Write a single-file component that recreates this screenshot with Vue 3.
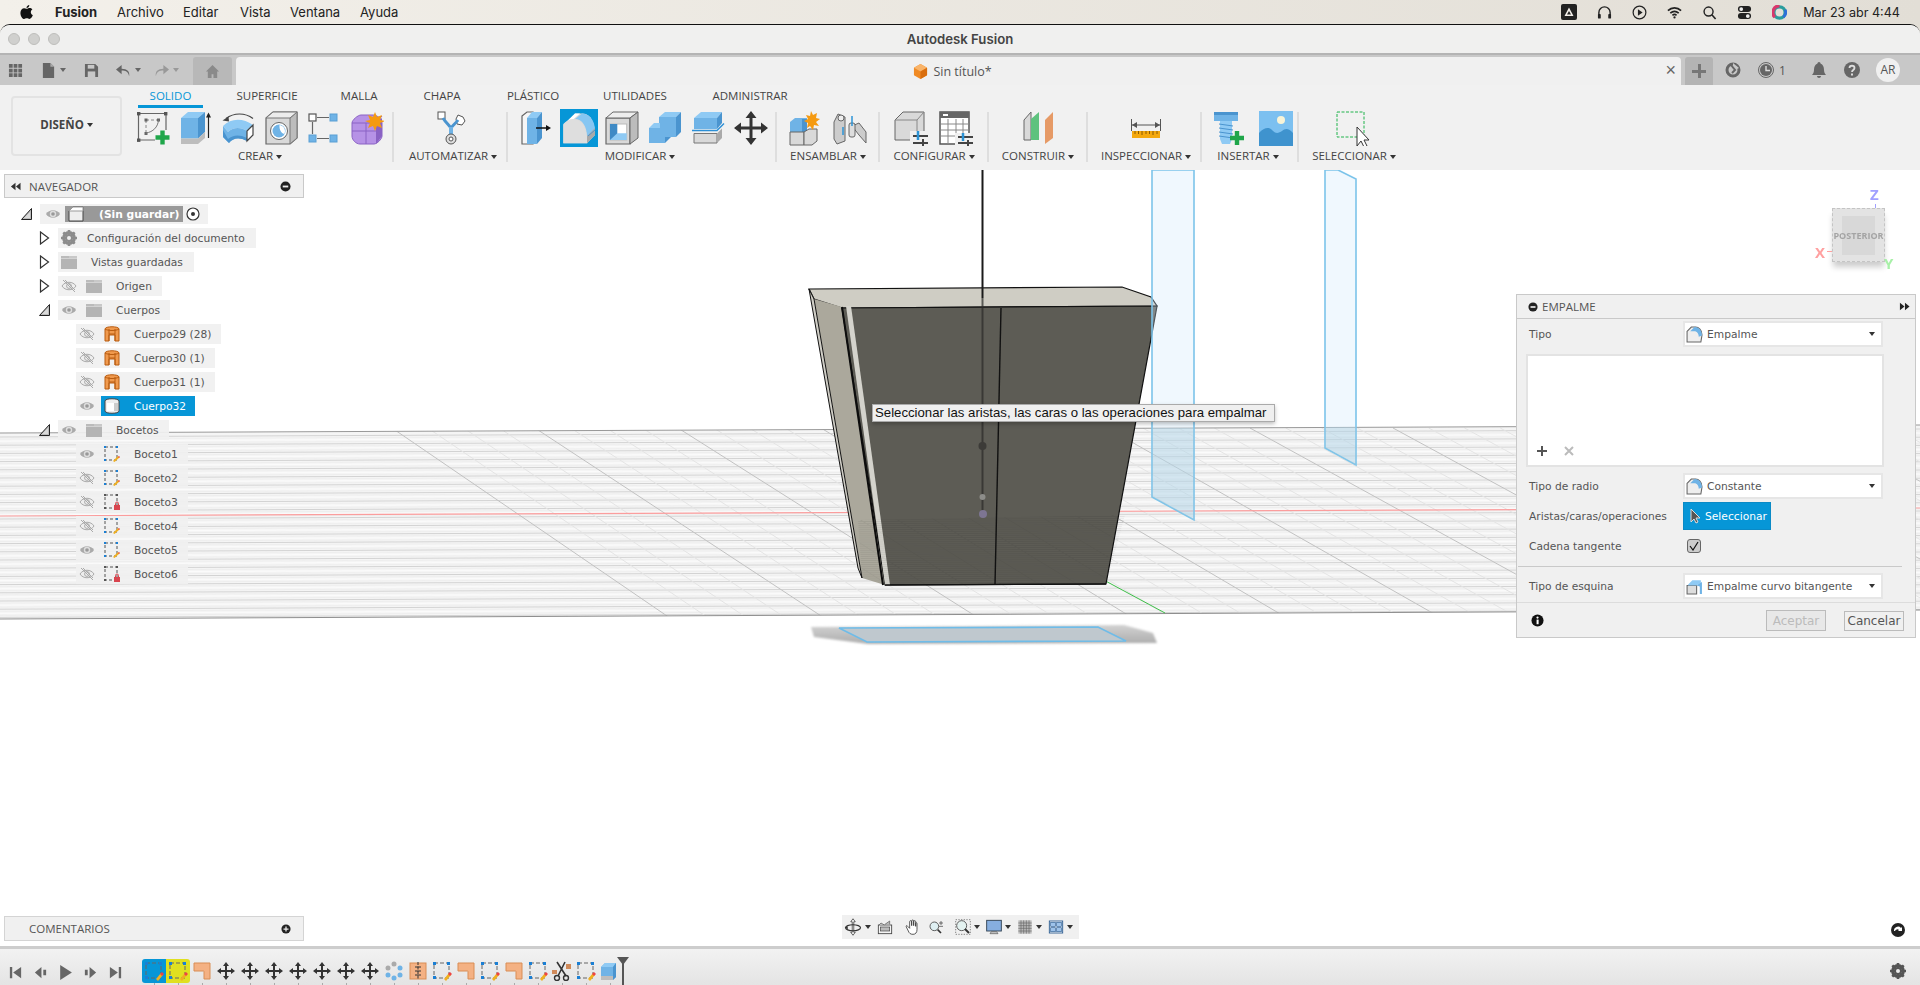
<script setup>
import { h } from 'vue'

const B = '#6fb3e6', BT = '#8fcaf4', BS = '#4a94cf', G = '#d9d9d9', GS = '#bdbdbd', O = '#f4b183'
const plus = (x, y) => `<path d="M${x - 7} ${y}h14M${x} ${y - 7}v14" stroke="#1fa64a" stroke-width="4.400"/>`
const ICONS = {
  sketch: [36, `<path d="M3.500 3.500H31V20M3.500 3.500V30H20" fill="none" stroke="#666" stroke-width="1.200"/><rect x="2" y="2" width="3.400" height="3.400" fill="#555"/><rect x="29" y="2" width="3.400" height="3.400" fill="#555"/><rect x="2" y="28.500" width="3.400" height="3.400" fill="#555"/><path d="M11 10H23M11 10V23" stroke="#888" stroke-dasharray="3 2" fill="none"/><rect x="9.500" y="8.500" width="3" height="3" fill="#666"/><rect x="22" y="8.500" width="3" height="3" fill="#666"/><rect x="9.500" y="22" width="3" height="3" fill="#666"/><path d="M11 23c7-1 12-6 12.500-13" fill="none" stroke="#777"/>${plus(27.5, 27.5)}`],
  extrude: [36, `<path d="M5 8l7-6h17l-7 6z" fill="${BT}"/><path d="M5 8h17v20.500H5z" fill="${B}"/><path d="M22 8l7-6v20l-7 6.500z" fill="${BS}"/><path d="M5 28.500h17l7-6.500v6l-7 6H5z" fill="${GS}"/><path d="M32.500 28V4" stroke="#222" stroke-width="1.200" fill="none"/><path d="M30 7.500l2.500-5 2.500 5z" fill="#222"/>`],
  revolve: [36, `<path d="M5 8.500C13 2.500 24 2.500 32 8.500" fill="none" stroke="#444" stroke-width="1.200"/><path d="M1.500 10.500l6-4 .5 5z" fill="#444"/><path d="M2 16C10 8 22 8 32 15l-6 6C20 17 12 17 7 22z" fill="${BT}"/><path d="M2 16l5 6C12 17 20 17 26 21v10C20 27 12 27 8 33l-6-6z" fill="${B}"/><path d="M2 20v7l6 6c4-5 10-6 18-2v-3C18 24 12 25 7 29z" fill="${BS}"/><path d="M26 21l6-6v10l-6 6z" fill="#fff" stroke="#444" stroke-width="1.200"/>`],
  hole: [36, `<path d="M2 8l7-6h24v26l-7 6H2z" fill="${G}" stroke="#666" stroke-width="1.200"/><path d="M26 8v26l7-6V2z" fill="#bcbcbc" stroke="#777"/><path d="M2 8h24l7-6H9z" fill="#ececec" stroke="#777"/><circle cx="15" cy="21" r="8.500" fill="#fff" stroke="#666"/><circle cx="15" cy="21" r="6.500" fill="${B}"/><path d="M15.500 15c3 .3 5.500 3 5.500 6 0 1-.2 2-.8 3-3-1-5-4-4.700-9z" fill="#fff"/>`],
  pattern: [36, `<rect x="5" y="4" width="7" height="7" fill="#fff" stroke="#555" stroke-width="1.200"/><rect x="26" y="4" width="7" height="7" fill="#6fb3e6" stroke="#5a9fd4"/><rect x="5" y="25" width="7" height="7" fill="#6fb3e6" stroke="#5a9fd4"/><rect x="26" y="25" width="7" height="7" fill="#6fb3e6" stroke="#5a9fd4"/><path d="M13 7.500h12M8.500 12v12M13 28.500h12" stroke="#666" stroke-width="1.200" fill="none"/>`],
  form: [36, `<path d="M4 13c0-3 6-8 9-8h12c4 0 9 4 9 8v13c0 3-5 8-8 8H12c-4 0-8-4-8-8z" fill="#b692e6" stroke="#8a62c4"/><path d="M4 21h24M18 13v21M4 13h24l6-7" stroke="#8a62c4" fill="none"/><path d="M28 13l6-5v18l-6 8z" fill="#8a62c4"/><path d="M27 2l2 5 5-2-2 5 5 1-5 2 2 5-5-2-2 5-2-5-5 2 2-5-5-2 5-1-2-5 5 2z" fill="#f59a10"/>`],
  automate: [36, `<rect x="5" y="2" width="7" height="7" fill="#fff" stroke="#555"/><path d="M25 5l5 2 2 4-3 4-5-1-1-5z" fill="#fff" stroke="#555"/><path d="M10 8c3 5 6 7 8 10 2-3 5-5 7-8" stroke="${BS}" stroke-width="3" fill="none"/><path d="M18 17v9" stroke="${B}" stroke-width="4"/><circle cx="18" cy="29" r="5" fill="#ddd" stroke="#555"/><circle cx="18" cy="29" r="2" fill="#fff" stroke="#555"/>`],
  press: [36, `<path d="M5 6l5-4h6v32H5z" fill="#f6f6f6" stroke="#666" stroke-width="1.200"/><path d="M10 8l5-6h10l-5 6z" fill="${BT}"/><path d="M10 8h10v26H10z" fill="${B}"/><path d="M20 8l5-6v26l-5 6z" fill="${BS}"/><path d="M19 18h11" stroke="#111" stroke-width="1.600"/><path d="M29 15l5 3-5 3z" fill="#111"/>`],
  fillet: [38, `<rect width="38" height="38" fill="#0696d7"/><path d="M3.300 16L15 4.500h8C31 5 35 14 35 26l-8 8.300H3.300z" fill="#d9d9d9"/><path d="M3.300 16L15 4.500h5L9 14z" fill="#fff"/><path d="M15 10l7-5.500C31 5 35 14 35 21l-8 7C27 17 22 10 15 10z" fill="#86c6f2"/><path d="M3.300 15c3-3 6-5 10-5 9 0 14 9 14 24.300H3.300z" fill="#dedede"/><path d="M27 34.300l8-8.300v-7l-8 8z" fill="#a9a9a9"/><path d="M28 27l7-6" stroke="#4a94cf"/>`],
  chamfer: [36, `<path d="M2 8h24v26H2z" fill="${G}" stroke="#666" stroke-width="1.200"/><path d="M2 8l7-6h25l-8 6z" fill="#eee" stroke="#666"/><path d="M26 8l8-6v26l-8 6z" fill="#bcbcbc" stroke="#666"/><rect x="6" y="14" width="16.700" height="16" fill="#fff" stroke="#bbb"/><path d="M6 14h7.300v16H6z" fill="#3f8ac5"/><path d="M13.300 23.300h9.400V30H6z" fill="${BT}"/>`],
  combine: [36, `<path d="M13 7l6-5h16l-5 5z" fill="${BT}"/><path d="M13 7h17v20H13z" fill="${B}"/><path d="M30 7l5-5v20l-5 5z" fill="${BS}"/><path d="M3 18l5-5h6v5z" fill="${BT}"/><path d="M3 18h16v15H3z" fill="${B}"/><path d="M19 33l6-6h-6z" fill="${BS}"/>`],
  offset: [36, `<path d="M5 8l7-6h21l-5 6z" fill="${BT}"/><path d="M5 8h23v11H5z" fill="${B}"/><path d="M28 8l5-6v11l-5 6z" fill="${BS}"/><path d="M3 20.500h25l7-7" stroke="#2b8fd6" stroke-width="1.400" fill="none"/><path d="M5 23.500h23v9.500H5z" fill="${G}" stroke="#777"/><path d="M28 23.500l5-5v9.500l-5 5z" fill="#aaa"/>`],
  move: [36, `<path d="M18 1l5.500 7H19.500v8.500H28v-4l7 5.500-7 5.500v-4h-8.500V28h4L18 35l-5.500-7h4v-8.500H8v4L1 18l7-5.500v4h8.500V8h-4z" fill="#333"/>`],
  joint: [36, `<path d="M3 12l5-4h12v14H3z" fill="${B}"/><path d="M15 9h5v13h-5z" fill="${BS}"/><path d="M3 22h14v13H3z" fill="${G}" stroke="#666"/><path d="M17 22l5-3h8v12l-5 4h-8z" fill="${G}" stroke="#666"/><path d="M24 1l2 4 4-2-1 5 4 1-4 3 3 4-5-1-1 5-3-4-3 2 1-5-4-2 4-2-2-4 4 1z" fill="#f59a10"/>`],
  rigid: [36, `<path d="M2 12l4-8 7 3v24l-8 3-3-5z" fill="#ccc" stroke="#666"/><circle cx="9" cy="8" r="3" fill="#eee" stroke="#666"/><path d="M20 16l7-3 7 9v11l-7-8z" fill="#ccc" stroke="#666"/><rect x="17" y="13" width="6" height="14" rx="2" fill="#ddd" stroke="#666"/><path d="M11 17v8M20 6v10" stroke="#2b93d6" stroke-width="1.500"/>`],
  config: [36, `<path d="M2 10l8-8h21v28H2z" fill="${G}" stroke="#666"/><path d="M24 10v20M24 10H2M24 10l7-8" stroke="#888" fill="none"/><rect x="17" y="21" width="19" height="14" fill="#f0f0f0"/><path d="M20 26h15M20 33h15" stroke="#444" stroke-width="2"/><path d="M25 21v9" stroke="#2b93d6" stroke-width="2.500"/><path d="M30 29v7" stroke="#444" stroke-width="2"/>`],
  table: [36, `<rect x="2" y="2" width="29" height="32" fill="#fff" stroke="#555" stroke-width="1.500"/><rect x="2" y="2" width="29" height="6" fill="#666"/><rect x="5" y="4" width="5" height="2" fill="#fff"/><path d="M3 14h28M3 20h28M3 26h28M10 9v25M18 9v25M25 9v25" stroke="#888"/><rect x="17" y="23" width="19" height="13" fill="#f0f0f0"/><path d="M20 27h15M20 33h15" stroke="#444" stroke-width="2"/><path d="M25 23v8" stroke="#2b93d6" stroke-width="2.500"/><path d="M30 30v6" stroke="#444" stroke-width="2"/>`],
  construct: [36, `<path d="M4 10l7-8v28H4z" fill="${G}" stroke="#666"/><path d="M11 9l8-7v28h-8z" fill="#5ec27e"/><path d="M25 10l8-8v26l-8 6z" fill="#e69a66"/>`],
  measure: [36, `<path d="M3.500 9v12M32.500 9v12" stroke="#555"/><path d="M4 15h28" stroke="#555"/><path d="M4 15l5-3v6zM32 15l-5-3v6z" fill="#555"/><rect x="4" y="21" width="28" height="7" fill="#f5a90e"/><path d="M7 21v3M10.500 21v3M14 21v4M18 21v3M21.500 21v3M25 21v4M29 21v3" stroke="#8a5a00"/>`],
  bolt: [36, `<path d="M2 2h24v9H2z" fill="${B}"/><path d="M2 2h24v3H2z" fill="${BS}"/><path d="M8 11h12v18l-2 5h-8l-2-5z" fill="${BT}"/><path d="M7 14l14 2M7 18l14 2M7 22l14 2M7 26l14 2" stroke="${BS}"/>${plus(25, 28)}`],
  image: [36, `<rect x="2" y="1" width="34" height="35" fill="#7cc0f0"/><circle cx="24" cy="10" r="4" fill="#f8f4d8"/><path d="M2 36V23c5-5 10-7 14-2 3 3 6 2 9 0 3-3 7-3 11 2v13z" fill="#3f93ce"/>`],
  select: [36, `<rect x="3" y="2" width="27" height="25" fill="none" stroke="#20b34d" stroke-dasharray="3 1.500"/><path d="M23 17v19l4-5 3 6 3-1-3-6h5z" fill="#fff" stroke="#333"/>`],
  eye: [16, `<path d="M1 8c3-5 11-5 14 0-3 5-11 5-14 0z" fill="#aaa"/><circle cx="8" cy="8" r="3.200" fill="#ddd"/><circle cx="8" cy="8" r="1.800" fill="#999"/>`],
  noeye: [16, `<path d="M1 8c3-5 11-5 14 0-3 5-11 5-14 0z" fill="#eee" stroke="#aaa"/><circle cx="8" cy="8" r="2.400" fill="none" stroke="#aaa"/><path d="M2 2l12 12M4 2l10 10" stroke="#aaa"/>`],
  folder: [16, `<path d="M0 2h8v2H0z" fill="#bbb"/><path d="M0 4.500h16V15H0z" fill="#b4b4b4"/><path d="M8 2h8v2H8z" fill="#c8c8c8"/>`],
  gear: [16, `<circle cx="8" cy="8" r="5.200" fill="none" stroke="#8c8c8c" stroke-width="3.400"/><path d="M8 0v16M0 8h16M2.300 2.300l11.400 11.400M13.700 2.300L2.300 13.700" stroke="#8c8c8c" stroke-width="2.600"/><circle cx="8" cy="8" r="2" fill="#eee"/>`],
  bodyo: [16, `<path d="M1 3c0-3 14-3 14 0v12h-4V9H5v6H1z" fill="#f09a4e" stroke="#b95c10"/><path d="M5 3v12M11 3v12M1 3c3 2 11 2 14 0" stroke="#b95c10" fill="none"/><path d="M5 8h6" stroke="#b95c10"/>`],
  bodyw: [16, `<path d="M1 3c0-3 14-3 14 0v10c0 3-14 3-14 0z" fill="#eee" stroke="#444"/><path d="M3 5h10v8H3z" fill="#fff"/><path d="M10 5h4v8h-4z" fill="#ccc"/>`],
  root: [16, `<path d="M1 5l4-4h10v14H1z" fill="#eee" stroke="#444"/><path d="M5 1h10v4H1z" fill="#fff" stroke="#999"/>`],
  sk: [16, `<rect x="1" y="1" width="12" height="13" fill="none" stroke="#555" stroke-dasharray="3 2"/><rect x="0" y="0" width="2" height="2" fill="#1a7fd4"/><rect x="12" y="0" width="2" height="2" fill="#1a7fd4"/><rect x="0" y="13" width="2" height="2" fill="#1a7fd4"/><path d="M9 15l5-5 1.500 1.500-5 4.500z" fill="#f0b020"/><path d="M14 11l1-1 1 1-1 1z" fill="#e44"/>`],
  sklock: [16, `<rect x="1" y="1" width="12" height="13" fill="none" stroke="#555" stroke-dasharray="3 2"/><rect x="0" y="0" width="2" height="2" fill="#555"/><rect x="12" y="0" width="2" height="2" fill="#555"/><rect x="0" y="13" width="2" height="2" fill="#555"/><rect x="10" y="11" width="6" height="5" fill="#d9454f"/><path d="M11.500 11V9.500a1.500 1.500 0 0 1 3 0V11" fill="none" stroke="#d9454f"/>`],
  ffil: [16, `<path d="M1 5l4-4h4c3 0 6 3 6 7v1l-1 6H1z" fill="#eee" stroke="#666"/><path d="M8 1c4 0 7 3 7 8l-3 1c0-3-2-5-4-5H4z" fill="${B}"/>`],
  fcor: [16, `<path d="M1 7h9v8H1z" fill="#ddd" stroke="#666"/><path d="M2 6l4-4h8v2l-4 3H2z" fill="${BT}"/><path d="M10 7l4-3h1v11h-2V8z" fill="${B}"/>`],
  lminus: [12, `<circle cx="6" cy="6" r="5.500" fill="#222"/><rect x="3" y="5" width="6" height="2" fill="#eee"/>`],
  lplus: [12, `<circle cx="6" cy="6" r="5.500" fill="#222"/><path d="M3 6h6M6 3v6" stroke="#eee" stroke-width="1.500"/>`],
  rew: [12, `<path d="M6 2v8L1 6zM11.500 2v8L6.500 6z" fill="#333"/>`],
  ff: [12, `<path d="M1 2v8l5-4zM6.500 2v8l5-4z" fill="#222"/>`],
  info: [14, `<circle cx="7" cy="7" r="6.500" fill="#111"/><rect x="6" y="6" width="2.200" height="5" fill="#fff"/><circle cx="7" cy="3.800" r="1.200" fill="#fff"/>`],
  grid9: [16, `<path d="M1 1h4v4H1zM6 1h4v4H6zM11 1h4v4h-4zM1 6h4v4H1zM6 6h4v4H6zM11 6h4v4h-4zM1 11h4v4H1zM6 11h4v4H6zM11 11h4v4h-4z" fill="#666"/>`],
  doc: [16, `<path d="M2 0h8l4 4v12H2z" fill="#666"/><path d="M10 0l4 4h-4z" fill="#aaa"/>`],
  save: [16, `<path d="M1 1h11l3 3v11H1z" fill="#666"/><rect x="4" y="2" width="7" height="4" fill="#c8c8c8"/><rect x="4" y="9" width="8" height="6" fill="#c8c8c8"/>`],
  undo: [16, `<path d="M14 14c1-5-2-8-8-8V2L0 7l6 5V8c4 0 7 1 8 6z" fill="#666"/>`],
  redo: [16, `<path d="M2 14c-1-5 2-8 8-8V2l6 5-6 5V8c-4 0-7 1-8 6z" fill="#999"/>`],
  home: [16, `<path d="M8 1l7 7h-2v7H9v-4H7v4H3V8H1z" fill="#8a8a8a"/>`],
  cubeo: [16, `<path d="M8 0l7 4v8l-7 4-7-4V4z" fill="#f08a24"/><path d="M1 4l7 4 7-4-7-4z" fill="#f9b46a"/><path d="M8 8v8l7-4V4z" fill="#d96e0e"/>`],
  recov: [16, `<circle cx="8" cy="8" r="6" fill="none" stroke="#666" stroke-width="3"/><path d="M8 1l6 5-6 3z" fill="#c8c8c8"/><path d="M6 3l4 5-3 3" fill="none" stroke="#666" stroke-width="2"/>`],
  clock: [16, `<circle cx="8" cy="8" r="7.500" fill="none" stroke="#666"/><circle cx="8" cy="8" r="6" fill="#666"/><path d="M8 4v4.500h4" fill="none" stroke="#ddd" stroke-width="1.400"/>`],
  bell: [16, `<path d="M8 0c1 0 1.500 1 1.500 1.500C12 2.500 13 5 13 8c0 2 1 4 2 5H1c1-1 2-3 2-5 0-3 1-5.500 3.500-6.500C6.500 1 7 0 8 0zM6 14h4c0 1-1 2-2 2s-2-1-2-2z" fill="#666"/>`],
  help: [16, `<circle cx="8" cy="8" r="8" fill="#666"/><path d="M5.500 6c0-3 5-3 5 0 0 2-2.500 2-2.500 4" fill="none" stroke="#ddd" stroke-width="1.800"/><rect x="7" y="11.500" width="2" height="2" fill="#ddd"/>`],
  apple: [16, `<path d="M11 1c0 2-1.500 3.300-3 3.200C8 2.500 9.500 1 11 1zM8 5c1 0 2-.8 3.300-.8 1 0 2.200.5 3 1.600-2.500 1.500-2.100 5 .5 6-.8 2-2.200 4.200-3.700 4.200-1 0-1.500-.7-2.800-.7s-1.800.7-2.800.7C3.500 16 1.500 12.500 1.500 9.500c0-3 2-5 4-5C6.500 4.500 7.200 5 8 5z" fill="#111"/>`],
  m_a: [16, `<rect width="16" height="16" rx="2" fill="#222"/><path d="M8 3.500l4.500 8.500h-9zM8 7l-2 3.500h4z" fill="#f3f0ea" fill-rule="evenodd"/>`],
  m_head: [16, `<path d="M2 11V8a6 6 0 0 1 12 0v3" fill="none" stroke="#222" stroke-width="1.500"/><rect x="1" y="9.500" width="3" height="5" rx="1" fill="#222"/><rect x="12" y="9.500" width="3" height="5" rx="1" fill="#222"/>`],
  m_play: [16, `<circle cx="8" cy="8" r="6.800" fill="none" stroke="#222" stroke-width="1.300"/><path d="M6.300 4.500l5 3.500-5 3.500z" fill="#222"/>`],
  m_wifi: [16, `<path d="M1 6c4-4 10-4 14 0M3.500 8.700c3-2.600 6-2.600 9 0M5.800 11c1.500-1.200 3-1.200 4.400 0" fill="none" stroke="#222" stroke-width="1.800"/><circle cx="8" cy="13.300" r="1.200" fill="#222"/>`],
  m_search: [16, `<circle cx="7" cy="7" r="4.800" fill="none" stroke="#222" stroke-width="1.500"/><path d="M10.500 10.500l4 4.500" stroke="#222" stroke-width="1.700"/>`],
  m_ctl: [16, `<rect x="1" y="1" width="14" height="6.500" rx="3.200" fill="#222"/><circle cx="4.500" cy="4.300" r="2" fill="#eee"/><rect x="1" y="8.500" width="14" height="6.500" rx="3.200" fill="#222"/><circle cx="11.500" cy="11.800" r="2" fill="#eee"/>`],
  m_siri: [16, `<circle cx="8" cy="8" r="6" fill="none" stroke="#2a9d9d" stroke-width="3.500"/><path d="M8 1a7 7 0 0 0-5 12" fill="none" stroke="#d9386c" stroke-width="3.500"/><path d="M14 5a7 7 0 0 1-2 8" fill="none" stroke="#2e6fd9" stroke-width="3"/>`],
  t_first: [16, `<path d="M2 2h2.500v12H2zM14 2v12L5.500 8z" fill="#666"/>`],
  t_prev: [16, `<path d="M9 2v12L2 8zM11 5h3v6h-3z" fill="#666"/>`],
  t_play: [16, `<path d="M3 1v14l11-7z" fill="#666"/>`],
  t_next: [16, `<path d="M7 2v12l7-6zM2 5h3v6H2z" fill="#666"/>`],
  t_last: [16, `<path d="M2 2v12l8.500-6zM11.500 2H14v12h-2.500z" fill="#666"/>`],
  t_orange: [20, `<path d="M2 2h16v16h-6v-7c0-1 0-1-1-1H2z" fill="${O}" stroke="#d98d55"/>`],
  t_move: [20, `<path d="M10 1l3 4h-2v4h4V7l4 3-4 3v-2h-4v4h2l-3 4-3-4h2v-4H5v2l-4-3 4-3v2h4V5H7z" fill="#333"/>`],
  t_pat: [20, `<circle cx="10" cy="3" r="2.500" fill="#aaa"/><circle cx="16" cy="7" r="2.500" fill="${B}"/><circle cx="16" cy="14" r="2.500" fill="${B}"/><circle cx="10" cy="17" r="2.500" fill="${B}"/><circle cx="4" cy="14" r="2.500" fill="${B}"/><circle cx="4" cy="7" r="2.500" fill="#aaa"/>`],
  t_split: [20, `<rect x="2" y="2" width="16" height="16" fill="${O}" stroke="#d98d55"/><path d="M10 1v18" stroke="#333" stroke-dasharray="3 1.500"/><path d="M7 6h6M7 10h6M7 14h6" stroke="#333"/>`],
  t_sk: [20, `<rect x="2" y="2" width="15" height="15" fill="none" stroke="#666" stroke-dasharray="4 2"/><rect x="1" y="1" width="3" height="3" fill="#1a7fd4"/><rect x="15" y="1" width="3" height="3" fill="#1a7fd4"/><rect x="1" y="15" width="3" height="3" fill="#1a7fd4"/><path d="M12 18l5-6 2 2-5 6z" fill="#f0b020"/><path d="M16 13l2-2 2 2-2 2z" fill="#e44"/>`],
  t_scis: [20, `<path d="M5 1l9 14M13 1L6 15" stroke="#333" stroke-width="1.600"/><circle cx="5" cy="17" r="2.500" fill="none" stroke="#333" stroke-width="1.400"/><circle cx="14" cy="17" r="2.500" fill="none" stroke="#333" stroke-width="1.400"/><rect x="14" y="3" width="5" height="5" fill="#d08a5a"/><path d="M0 9h5v4H0z" fill="#d08a5a"/>`],
  t_ext: [20, `<path d="M1 6l4-4h11v14l-3 3H1z" fill="${B}"/><path d="M1 6l4-4h11l-3 4z" fill="${BT}"/><path d="M13 6l3-4v14l-3 3z" fill="${BS}"/><path d="M1 15h12v4H1z" fill="${GS}"/>`],
  n_orbit: [24, `<path d="M12 1l3 4h-2v14h2l-3 4-3-4h2V5H9z" fill="#fff" stroke="#333"/><ellipse cx="12" cy="13" rx="10" ry="4" fill="none" stroke="#333" stroke-width="1.500"/><path d="M1 13l4-2v4z" fill="#333"/>`],
  n_look: [24, `<rect x="2" y="9" width="20" height="13" fill="#f4f4f4" stroke="#444" stroke-width="1.300"/><rect x="5" y="12" width="14" height="6" fill="#bbb" stroke="#444"/><path d="M3 9l3-3 5 3M12 8l7-5v5" fill="#bbb" stroke="#555"/>`],
  n_hand: [24, `<path d="M5 12l3 6c1 3 3 5 7 5s6-3 6-7V7c0-2-2-2-2 0v4-7c0-2-3-2-3 0v6-7c0-2-3-2-3 0v7-6c0-2-3-2-3 0v10l-3-3c-1-2-3-1-2 1z" fill="#fff" stroke="#333" stroke-width="1.200"/>`],
  n_zoom: [24, `<circle cx="8" cy="11" r="6.500" fill="#dff0f3" stroke="#555" stroke-width="1.400"/><path d="M13 16l5 5" stroke="#333" stroke-width="2.500"/><path d="M18 3v6M15 6h6M15 11h6" stroke="#333"/>`],
  n_fit: [24, `<rect x="1" y="1" width="22" height="22" fill="none" stroke="#555" stroke-dasharray="2 2"/><circle cx="10" cy="10" r="7.500" fill="#e4f2f0" stroke="#555" stroke-width="1.400"/><path d="M15 15l6 6" stroke="#333" stroke-width="2.800"/>`],
  n_disp: [24, `<rect x="1" y="2" width="22" height="16" fill="#86aee0" stroke="#345" stroke-width="1.400"/><path d="M8 19h8l2 3H6z" fill="#ccc" stroke="#555"/>`],
  n_grid: [24, `<rect x="2" y="2" width="20" height="20" fill="#bbb"/><path d="M6 2v20M10 2v20M14 2v20M18 2v20M2 6h20M2 10h20M2 14h20M2 18h20" stroke="#666"/>`],
  n_view: [24, `<rect x="2" y="3" width="20" height="18" fill="#fff" stroke="#2f5f93" stroke-width="1.400"/><rect x="4" y="5" width="7" height="6" fill="#9ec3ea" stroke="#2f5f93"/><rect x="13" y="5" width="7" height="6" fill="#9ec3ea" stroke="#2f5f93"/><rect x="4" y="13" width="7" height="6" fill="#9ec3ea" stroke="#2f5f93"/><rect x="13" y="13" width="7" height="6" fill="#9ec3ea" stroke="#2f5f93"/>`],
}
const Ic = (p) => h('svg', { width: p.s || ICONS[p.n][0], height: p.s || ICONS[p.n][0], viewBox: `0 0 ${ICONS[p.n][0]} ${ICONS[p.n][0]}`, innerHTML: ICONS[p.n][1], style: 'display:block;flex:none' })

const menus = ['Archivo', 'Editar', 'Vista', 'Ventana', 'Ayuda']
const status = ['m_a', 'm_head', 'm_play', 'm_wifi', 'm_search', 'm_ctl', 'm_siri']
const tabs = [['SOLIDO', 65, true], ['SUPERFICIE', 128], ['MALLA', 56], ['CHAPA', 110], ['PLÁSTICO', 72], ['UTILIDADES', 132], ['ADMINISTRAR', 98]]

const raw = [
  { x: 133, e: 394, label: 'CREAR', lc: 260, icons: [['sketch', 153], ['extrude', 194], ['revolve', 239], ['hole', 282], ['pattern', 322], ['form', 366]] },
  { x: 394, e: 508, label: 'AUTOMATIZAR', lc: 453, icons: [['automate', 451]] },
  { x: 508, e: 777, label: 'MODIFICAR', lc: 640, icons: [['press', 535], ['fillet', 579], ['chamfer', 622], ['combine', 664], ['offset', 707], ['move', 751]] },
  { x: 777, e: 880, label: 'ENSAMBLAR', lc: 828, icons: [['joint', 805], ['rigid', 850]] },
  { x: 880, e: 989, label: 'CONFIGURAR', lc: 934, icons: [['config', 911], ['table', 956]] },
  { x: 989, e: 1088, label: 'CONSTRUIR', lc: 1038, icons: [['construct', 1038]] },
  { x: 1088, e: 1202, label: 'INSPECCIONAR', lc: 1146, icons: [['measure', 1146]] },
  { x: 1202, e: 1299, label: 'INSERTAR', lc: 1248, icons: [['bolt', 1230], ['image', 1275]] },
  { x: 1299, e: 1410, label: 'SELECCIONAR', lc: 1354, icons: [['select', 1352]], last: true },
]
const groups = raw.map((g) => {
  let left = g.x
  const cells = g.icons.map(([n, c]) => {
    const w = 2 * (c - left)
    left += w
    return { n, w }
  })
  return { ...g, cells, w: g.e - g.x, lw: 2 * (g.lc - g.x) }
})

const navRows = [
  { lvl: 1, arrow: 'r', icon: 'gear', text: 'Configuración del documento', kind: 'noeye', gap: 10, pr: 11 },
  { lvl: 1, arrow: 'r', icon: 'folder', text: 'Vistas guardadas', kind: 'noeye', gap: 14, pr: 11 },
  { lvl: 1, arrow: 'r', eye: 'noeye', icon: 'folder', text: 'Origen' },
  { lvl: 1, arrow: 'd', eye: 'eye', icon: 'folder', text: 'Cuerpos' },
  { lvl: 2, eye: 'noeye', icon: 'bodyo', text: 'Cuerpo29 (28)' },
  { lvl: 2, eye: 'noeye', icon: 'bodyo', text: 'Cuerpo30 (1)' },
  { lvl: 2, eye: 'noeye', icon: 'bodyo', text: 'Cuerpo31 (1)' },
  { lvl: 2, eye: 'eye', icon: 'bodyw', text: 'Cuerpo32', sel: true },
  { lvl: 1, arrow: 'd', eye: 'eye', icon: 'folder', text: 'Bocetos' },
  { lvl: 2, eye: 'eye', icon: 'sk', text: 'Boceto1' },
  { lvl: 2, eye: 'noeye', icon: 'sk', text: 'Boceto2' },
  { lvl: 2, eye: 'noeye', icon: 'sklock', text: 'Boceto3' },
  { lvl: 2, eye: 'noeye', icon: 'sk', text: 'Boceto4' },
  { lvl: 2, eye: 'eye', icon: 'sk', text: 'Boceto5' },
  { lvl: 2, eye: 'noeye', icon: 'sklock', text: 'Boceto6' },
]

const navTools = [['n_orbit', true], ['n_look'], ['n_hand'], ['n_zoom'], ['n_fit', true], ['n_disp', true], ['n_grid', true], ['n_view', true]]
const playBtns = ['t_first', 't_prev', 't_play', 't_next', 't_last']
const tl = ['t_sk', 't_sk', 't_orange', 't_move', 't_move', 't_move', 't_move', 't_move', 't_move', 't_move', 't_pat', 't_split', 't_sk', 't_orange', 't_sk', 't_orange', 't_sk', 't_scis', 't_sk', 't_ext']

const hl = []
for (let i = 0; i <= 92; i++) {
  const y = 437 + i * 2.05
  if (y > 620) break
  hl.push({ y1: y, y2: y - 8, c: i % 4 === 0 ? '#d3d3d3' : i % 2 === 0 ? '#fbfbfb' : '#eeeeee' })
}
const dl = []
for (let i = -24; i <= 22; i++) {
  const xt = 1250 + i * 35.75
  const slope = 1.3 + Math.max(0, Math.min(1, xt / 1300)) * 0.54
  dl.push({ x1: xt, x2: xt + 195 * slope, c: i % 4 === 0 ? '#c2c2c2' : '#e4e4e4' })
}
</script>

<template>
  <div class="app">
    <header class="menubar">
      <Ic n="apple" :s="15" class="apple" />
      <b class="appname">Fusion</b>
      <span v-for="m in menus" :key="m" class="menu">{{ m }}</span>
      <div class="status">
        <Ic v-for="s in status" :key="s" :n="s" :s="s === 'm_a' ? 16 : 15" class="st" />
        <span class="clock">Mar 23 abr 4:44</span>
      </div>
    </header>

    <div class="window">
      <div class="titlebar">
        <div class="lights"><i></i><i></i><i></i></div>
        <span class="wintitle">Autodesk Fusion</span>
      </div>

      <div class="tabstrip">
        <div class="qat">
          <Ic n="grid9" :s="15" /><Ic n="doc" :s="15" class="q1" /><i class="caret q2"></i>
          <Ic n="save" :s="15" class="q3" /><Ic n="undo" :s="15" class="q4" /><i class="caret q2"></i>
          <Ic n="redo" :s="15" class="q5" /><i class="caret q2 dim"></i>
        </div>
        <div class="hometab"><Ic n="home" :s="15" /></div>
        <div class="doctab">
          <div class="docname"><Ic n="cubeo" :s="15" /><span>Sin título*</span></div>
          <span class="close">×</span>
        </div>
        <div class="plusbtn"><span class="plusmark"></span></div>
        <div class="tools">
          <Ic n="recov" :s="16" class="t1" />
          <Ic n="clock" :s="16" class="t2" /><span class="cnt">1</span>
          <Ic n="bell" :s="16" class="t3" />
          <Ic n="help" :s="16" class="t4" />
          <span class="avatar">AR</span>
        </div>
      </div>

      <div class="toolbar">
        <button class="diseno">DISEÑO <i class="caret dark"></i></button>
        <div class="ribbon">
          <div class="tabs">
            <span v-for="t in tabs" :key="t[0]" class="tab" :class="{ on: t[2] }" :style="{ width: t[1] + 'px' }">{{ t[0] }}</span>
          </div>
          <div class="groups">
            <div v-for="g in groups" :key="g.label" class="group" :class="{ last: g.last }" :style="{ width: g.w + 'px' }">
              <div class="gicons">
                <div v-for="(c, i) in g.cells" :key="i" class="cell" :style="{ width: c.w + 'px' }">
                  <Ic :n="c.n" :s="c.n === 'fillet' ? 38 : 36" />
                </div>
              </div>
              <div class="glabel" :style="{ width: g.lw + 'px' }">{{ g.label }} <i class="caret dark"></i></div>
            </div>
          </div>
        </div>
      </div>

      <main class="viewport">
        <svg class="scene" viewBox="0 170 1920 815" width="1920" height="815">
          <defs>
            <clipPath id="gnd"><polygon points="0,433 1920,425 1920,610 0,619" /></clipPath>
            <clipPath id="low"><polygon points="858,520 1125,515 1106,584 885,585 862,578" /></clipPath>
            <linearGradient id="refl" x1="0" x2="0" y1="0" y2="1"><stop offset="0" stop-color="#d2d2d2" /><stop offset="1" stop-color="#adadad" /></linearGradient>
            <filter id="soft" x="-5%" y="-30%" width="110%" height="160%"><feGaussianBlur stdDeviation="1.200" /></filter>
          </defs>
          <polygon points="0,433 1920,425 1920,610 0,619" fill="#f5f5f5" />
          <g clip-path="url(#gnd)">
            <line v-for="(l, i) in hl" :key="'h' + i" x1="0" x2="1920" :y1="l.y1" :y2="l.y2" :stroke="l.c" stroke-width="1" />
            <line v-for="(l, i) in dl" :key="'d' + i" :x1="l.x1" :x2="l.x2" y1="428" y2="623" :stroke="l.c" stroke-width="1" />
          </g>
          <line x1="0" x2="1920" y1="433" y2="425" stroke="#999" />
          <line x1="0" x2="1920" y1="619" y2="610" stroke="#8e8e8e" />
          <line x1="0" x2="1920" y1="516" y2="508" stroke="#fb9d9d" stroke-width="1.200" />
          <line x1="996" y1="522" x2="1165" y2="613" stroke="#3fbf4a" />

          <polygon points="811,627 1124,625 1153,633 1157,643 868,644 814,637" fill="url(#refl)" filter="url(#soft)" />
          <polygon points="839,628 1098,627 1126,641 867,642" fill="#bfc8ce" stroke="#6fbce8" stroke-width="1.700" />

          <polygon points="809,289 1122,287 1151,297 1157,306 842,308 814,299" fill="#cfcdc4" stroke="#111" stroke-width="1.200" />
          <polygon points="814,299 842,307 885,585 862,578" fill="#aba89c" />
          <polygon points="809,289 814,299 862,578 858,568" fill="#d0cec6" stroke="#111" stroke-width="1" />
          <polygon points="842,308 1157,306 1106,584 885,585" fill="#5d5c55" stroke="#111" stroke-width="1.200" />
          <polygon points="846,306 851,306 890,585 885,585" fill="#d4d3cc" />
          <g clip-path="url(#low)" opacity=".06">
            <line v-for="(l, i) in hl" :key="'b' + i" x1="0" x2="1920" :y1="l.y1" :y2="l.y2" stroke="#000" stroke-width="1" />
            <line v-for="(l, i) in dl" :key="'c' + i" :x1="l.x1" :x2="l.x2" y1="428" y2="623" stroke="#000" stroke-width="1" />
          </g>
          <line x1="842" y1="307" x2="883" y2="585" stroke="#0c0c0c" stroke-width="2" />
          <line x1="1001" y1="308" x2="995" y2="585" stroke="#111" stroke-width="1.400" />
          <line x1="982.500" y1="170" x2="982.500" y2="298" stroke="#1a1a1a" stroke-width="2" />
          <line x1="982.500" y1="298" x2="982.500" y2="515" stroke="#2a2a28" stroke-width="2" opacity=".7" />
          <line x1="885" y1="585" x2="1106" y2="584" stroke="#111" stroke-width="1.400" />
          <circle cx="982.500" cy="446" r="4" fill="#3c3b38" />
          <circle cx="982.500" cy="497" r="3" fill="#8d8d8a" />
          <circle cx="983" cy="514" r="4" fill="#7d7592" />

          <polygon points="1152,170 1194,170 1194,520 1152,497" fill="#cfeafd" fill-opacity=".32" stroke="#7cc4ea" stroke-width="1.600" />
          <polygon points="1152,428 1194,428 1194,520 1152,497" fill="#9cc6dc" fill-opacity=".3" />
          <polygon points="1325,170 1338,170 1356,179 1356,465 1325,448" fill="#cfeafd" fill-opacity=".32" stroke="#7cc4ea" stroke-width="1.600" />
          <polygon points="1325,427 1356,427 1356,465 1325,448" fill="#9cc6dc" fill-opacity=".3" />
        </svg>

        <div class="viewcube">
          <div class="cube"><div class="face"><span>POSTERIOR</span></div></div>
          <i class="tick tz"></i><i class="tick tx"></i>
          <span class="axis z">Z</span><span class="axis x">X</span><span class="axis y">Y</span>
        </div>

        <div class="tooltip">Seleccionar las aristas, las caras o las operaciones para empalmar</div>

        <section class="nav">
          <div class="navhead"><Ic n="rew" :s="11" class="rew" /><span class="navtitle">NAVEGADOR</span><Ic n="lminus" :s="11" /></div>
          <div class="tree">
            <div class="row root">
              <svg class="tri" width="11" height="12" viewBox="0 0 11 12"><path d="M10.500 .5v11H.5z" fill="#bbb" stroke="#222" /><path d="M9 4v6H3z" fill="#eee" opacity=".6" /></svg>
              <div class="pill rootpill">
                <span class="eye"><Ic n="eye" :s="16" /></span>
                <div class="rootname"><Ic n="root" :s="16" /><b>(Sin guardar)</b></div>
                <svg class="target" width="14" height="14" viewBox="0 0 14 14"><circle cx="7" cy="7" r="6" fill="#fff" stroke="#333" stroke-width="1.200" /><circle cx="7" cy="7" r="2" fill="#333" /></svg>
              </div>
            </div>
            <div v-for="r in navRows" :key="r.text" class="row" :class="'l' + r.lvl">
              <svg v-if="r.arrow === 'r'" class="tri" width="11" height="14" viewBox="0 0 11 14"><path d="M1.500 1l8 6-8 6z" fill="#fff" stroke="#333" stroke-width="1.200" /></svg>
              <svg v-else-if="r.arrow === 'd'" class="tri" width="11" height="12" viewBox="0 0 11 12"><path d="M10.500 .5v11H.5z" fill="#bbb" stroke="#222" /><path d="M9 4v6H3z" fill="#eee" opacity=".6" /></svg>
              <div class="pill" :class="{ noeye: r.kind, bare: r.sel }" :style="r.pr ? { paddingRight: r.pr + 'px' } : null">
                <span v-if="r.eye" class="eye"><Ic :n="r.eye" :s="16" /></span>
                <div v-if="r.sel" class="selname"><Ic :n="r.icon" :s="16" /><span>{{ r.text }}</span></div>
                <template v-else>
                  <Ic :n="r.icon" :s="16" class="ico" />
                  <span class="lbl" :style="r.gap ? { marginLeft: r.gap + 'px' } : null">{{ r.text }}</span>
                </template>
              </div>
            </div>
          </div>
        </section>

        <section class="panel">
          <div class="phead"><Ic n="lminus" :s="10" /><span>EMPALME</span><Ic n="ff" :s="11" /></div>
          <div class="prow first"><label>Tipo</label><div class="sel"><Ic n="ffil" :s="17" /><span>Empalme</span><i class="caret dark"></i></div></div>
          <div class="list">
            <svg width="12" height="12" viewBox="0 0 12 12"><path d="M1 6h10M6 1v10" stroke="#555" stroke-width="2" /></svg>
            <svg class="del" width="10" height="10" viewBox="0 0 10 10"><path d="M1 1l8 8M9 1l-8 8" stroke="#bbb" stroke-width="2" /></svg>
          </div>
          <div class="prow r2"><label>Tipo de radio</label><div class="sel"><Ic n="ffil" :s="17" /><span>Constante</span><i class="caret dark"></i></div></div>
          <div class="prow r3"><label>Aristas/caras/operaciones</label>
            <button class="selbtn"><svg width="12" height="16" viewBox="0 0 12 16"><path d="M1 1v13l3-3 2 4 2-1-2-4h4z" fill="#555" stroke="#ddd" /></svg>Seleccionar</button>
          </div>
          <div class="prow r4"><label>Cadena tangente</label><span class="chk"><svg width="10" height="10" viewBox="0 0 10 10"><path d="M1 5l3 4 5-8" fill="none" stroke="#111" stroke-width="1.200" /></svg></span></div>
          <hr class="sep" />
          <div class="prow r5"><label>Tipo de esquina</label><div class="sel"><Ic n="fcor" :s="17" /><span>Empalme curvo bitangente</span><i class="caret dark"></i></div></div>
          <div class="pfoot">
            <Ic n="info" :s="13" class="inf" />
            <button class="btn off">Aceptar</button>
            <button class="btn">Cancelar</button>
          </div>
        </section>

        <section class="comments"><span>COMENTARIOS</span><Ic n="lplus" :s="10" /></section>

        <div class="navbar">
          <template v-for="t in navTools" :key="t[0]">
            <Ic :n="t[0]" :s="t[0] === 'n_orbit' ? 18 : 16" class="nt" :class="{ wc: t[1] }" />
            <i v-if="t[1]" class="caret dark nc"></i>
          </template>
        </div>

        <svg class="cap" width="16" height="16" viewBox="0 0 16 16"><circle cx="8" cy="8" r="7" fill="#222" /><path d="M4 9a4 4 0 0 1 7-3l1-1v4H8l1-1a2.500 2.500 0 0 0-4 1z" fill="#fff" /></svg>
      </main>

      <footer class="timeline">
        <div class="play"><span v-for="p in playBtns" :key="p" class="pb"><Ic :n="p" :s="p === 't_play' ? 17 : 15" /></span></div>
        <div class="items">
          <span v-for="(t, i) in tl" :key="i" class="it" :class="{ a: i === 0, b: i === 1 }"><Ic :n="t" :s="20" /></span>
          <span class="marker"></span>
        </div>
        <svg class="gear" width="16" height="16" viewBox="0 0 16 16" v-html="ICONS.gear[1].replace(/#8c8c8c/g, '#555')"></svg>
      </footer>
    </div>
  </div>
</template>

<style scoped>
.app { width: 1920px; height: 985px; display: flex; flex-direction: column; overflow: hidden; background: linear-gradient(90deg, #f3f0ea, #e2ded6); font-family: "DejaVu Sans", sans-serif; color: #555; }
.menubar { height: 24px; flex: none; display: flex; align-items: center; font: 13px "Inter", "Liberation Sans", sans-serif; color: #222; position: relative; }
.apple { margin-left: 19px; margin-top: -2px; }
.appname { margin-left: 21px; width: 62px; font-weight: 700; }
.menu:nth-of-type(1) { width: 66px; }
.menu:nth-of-type(2) { width: 57px; }
.menu:nth-of-type(3) { width: 50px; }
.menu:nth-of-type(4) { width: 70px; }
.status { margin-left: auto; display: flex; align-items: center; padding-right: 20px; }
.st { margin-right: 20px; }
.clock { margin-left: -3.500px; font-size: 12.600px; }
.window { flex: 1; display: flex; flex-direction: column; min-height: 0; border-top: 1px solid #111; background: #f0f0ef; border-radius: 10px 10px 0 0; overflow: hidden; }
.titlebar { height: 28px; flex: none; border-bottom: 2px solid #b4b4b4; display: flex; align-items: center; justify-content: center; position: relative; background: #f0f0ef; }
.lights { position: absolute; left: 8px; top: 8px; display: flex; gap: 8px; }
.lights i { width: 12px; height: 12px; border-radius: 50%; background: #d0d0ce; border: 1px solid #bdbdbb; box-sizing: border-box; }
.wintitle { font: 600 13.200px "Inter", sans-serif; color: #444; }
.tabstrip { height: 30px; flex: none; display: flex; align-items: flex-end; background: #c8c8c8; }
.qat { width: 193px; height: 30px; flex: none; display: flex; align-items: center; padding-left: 8px; box-sizing: border-box; }
.q1 { margin-left: 18px; }
.q2 { margin-left: 4px; }
.q3 { margin-left: 18px; }
.q4 { margin-left: 17px; }
.q5 { margin-left: 13px; }
.caret { display: inline-block; width: 0; height: 0; border-left: 3.500px solid transparent; border-right: 3.500px solid transparent; border-top: 4px solid #666; vertical-align: middle; flex: none; }
.caret.dark { border-top-color: #333; }
.caret.dim { border-top-color: #999; }
.hometab { width: 39px; height: 28px; background: #b8b8b8; border-radius: 3px 3px 0 0; display: flex; align-items: center; justify-content: center; }
.doctab { margin-left: 4px; width: 1445px; height: 28px; background: #f0f0f0; border-radius: 4px 4px 0 0; position: relative; display: flex; align-items: center; justify-content: center; }
.docname { display: flex; align-items: center; gap: 5px; margin-left: -12px; font: 12.500px "Open Sans", sans-serif; color: #555; }
.close { position: absolute; right: 5px; top: 3px; font: 18px "Liberation Sans", sans-serif; color: #666; }
.plusbtn { margin-left: 4px; width: 28px; height: 28px; background: #b4b4b4; border-radius: 3px 3px 0 0; display: flex; align-items: center; justify-content: center; }
.plusmark { width: 14px; height: 14px; background: linear-gradient(#777, #777) center / 14px 3px no-repeat, linear-gradient(#777, #777) center / 3px 14px no-repeat; }
.tools { flex: 1; height: 30px; display: flex; align-items: center; position: relative; }
.t1 { margin-left: 12px; }
.t2 { margin-left: 17px; }
.cnt { margin-left: 5px; font: 12px "Open Sans", sans-serif; color: #555; }
.t3 { margin-left: 25px; }
.t4 { margin-left: 17px; }
.avatar { margin-left: 16px; width: 24px; height: 24px; border-radius: 50%; background: #f0f0f0; font: 12px/24px "Open Sans", sans-serif; text-align: center; color: #555; }
.toolbar { height: 85px; flex: none; display: flex; background: #f1f1f1; padding-left: 11px; box-sizing: border-box; }
.diseno { width: 111px; height: 60px; margin: 11px 11px 0 0; flex: none; border: 2px solid #e3e3e3; border-radius: 4px; background: #f1f1f1; font: 700 11.500px "Open Sans", sans-serif; color: #444; padding: 0 0 4px; }
.ribbon { flex: 1; min-width: 0; }
.tabs { display: flex; height: 23px; margin-left: 5px; }
.tab { text-align: center; font: 11.500px/22px "Open Sans", sans-serif; color: #444; flex: none; box-sizing: border-box; white-space: nowrap; }
.tab.on { color: #0696d7; border-bottom: 3px solid #0696d7; }
.groups { display: flex; margin-top: 4px; }
.group { height: 50px; flex: none; box-sizing: border-box; border-right: 2px solid #dedede; }
.group.last { border-right: 0; }
.gicons { display: flex; height: 38px; margin-top: -3px; }
.cell { flex: none; display: flex; align-items: center; justify-content: center; }
.glabel { height: 20px; margin-top: -1px; font: 11.500px/19px "Open Sans", sans-serif; color: #444; text-align: center; white-space: nowrap; }
.viewport { flex: 1; position: relative; min-height: 0; background: #fff; overflow: hidden; }
.scene { position: absolute; left: 0; top: 0; display: block; }
.viewcube { position: absolute; left: 1800px; top: 20px; width: 100px; height: 90px; filter: blur(.4px); }
.cube { position: absolute; left: 32px; top: 18px; width: 53px; height: 54px; box-sizing: border-box; background: #e3e3e3; border: 1px dashed #c4c4c4; box-shadow: 0 6px 6px -1px rgba(0, 0, 0, .2); display: flex; align-items: center; justify-content: center; }
.face { width: 33px; height: 39px; background: #d8d8d8; display: flex; align-items: center; justify-content: center; }
.face span { font: 700 9px "Open Sans", sans-serif; color: #a4a4a4; }
.axis { position: absolute; font: 700 15px "Open Sans", sans-serif; }
.tick { position: absolute; }
.tz { left: 75px; top: 14px; width: 1px; height: 4px; background: #a0a0ff; }
.tx { left: 27px; top: 61px; width: 5px; height: 1px; background: #ffa0a0; }
.z { left: 70px; top: -6px; color: #a0a0ff; }
.x { left: 15px; top: 52px; color: #ffa0a0; }
.y { left: 84px; top: 63px; color: #a8f0a8; }
.tooltip { position: absolute; left: 872px; top: 234px; height: 18px; padding: 0 2px; box-sizing: border-box; background: #efefef; border: 1px solid #aaa; box-shadow: 0 2px 4px rgba(0, 0, 0, .25); font: 13.200px/16px "Liberation Sans", sans-serif; color: #111; white-space: nowrap; width: 403px; }
.nav { position: absolute; left: 4px; top: 4px; width: 300px; font-size: 10.700px; }
.navhead { height: 24px; box-sizing: border-box; border: 1px solid #c9c9c9; background: #f0f0f0; display: flex; align-items: center; padding: 0 12px 0 5px; font: 11.500px "Open Sans", sans-serif; color: #555; }
.rew { margin-right: 8px; }
.navtitle { flex: 1; }
.tree { margin-top: 4px; margin-left: -4px; }
.row { height: 24px; display: flex; align-items: center; }
.row.root { padding-left: 21px; }
.row.l1 { padding-left: 39px; }
.row.l2 { padding-left: 76px; }
.tri { display: block; flex: none; margin-right: 8px; }
.pill { height: 20px; display: flex; align-items: center; background: rgba(240, 240, 240, .92); padding-right: 10px; font-size: 10.700px; color: #555; white-space: nowrap; }
.pill.noeye { padding-left: 3px; }
.eye { width: 22px; display: flex; justify-content: center; flex: none; }
.ico { margin-left: 6px; }
.pill.noeye .ico { margin-left: 0; }
.lbl { margin-left: 14px; }
.rootpill { padding-right: 8px; }
.rootpill .eye { width: 25px; }
.rootname { width: 118px; height: 16px; background: #999; display: flex; align-items: center; color: #fff; padding-left: 3px; box-sizing: border-box; }
.rootname b { margin-left: 15px; font-size: 10.700px; }
.target { margin-left: 3px; }
.pill.bare { padding-right: 0; }
.selname { margin-left: 3px; width: 94px; height: 20px; background: #0696d7; color: #fff; display: flex; align-items: center; padding-left: 3px; box-sizing: border-box; gap: 14px; }
.panel { position: absolute; left: 1516px; top: 124px; width: 400px; height: 344px; box-sizing: border-box; border: 1px solid #c9c9c9; background: #f0f0f0; font-size: 10.700px; color: #555; }
.phead { height: 24px; box-sizing: border-box; border-bottom: 1px solid #c9c9c9; display: flex; align-items: center; padding: 0 5px 0 11px; font: 11.500px "Open Sans", sans-serif; gap: 4px; }
.phead span { flex: 1; }
.prow { display: flex; align-items: center; }
.prow label { width: 166px; padding-left: 12px; box-sizing: border-box; flex: none; }
.prow.first { margin-top: 2px; }
.sel { width: 200px; height: 26px; box-sizing: border-box; border: 2px solid #e6e6e6; background: #fff; display: flex; align-items: center; padding: 0 6px 0 1px; gap: 4px; }
.sel span { flex: 1; }
.list { margin: 7px 0 0 9px; width: 358px; height: 113px; box-sizing: border-box; border: 2px solid #e3e3e3; background: #fff; display: flex; align-items: flex-end; gap: 16px; padding: 0 0 8px 8px; }
.del { margin-bottom: 1px; }
.r2 { margin-top: 6px; }
.r3 { margin-top: 3px; height: 28px; }
.selbtn { width: 88px; height: 28px; background: #0696d7; border: 1px solid #0a8ac6; color: #fff; font: 10.700px "DejaVu Sans", sans-serif; display: flex; align-items: center; padding: 0 0 0 6px; gap: 3px; }
.r4 { margin-top: 2px; height: 28px; }
.chk { margin-left: 4px; width: 14px; height: 14px; box-sizing: border-box; border: 1px solid #666; border-radius: 3px; background: #ccc; display: flex; align-items: center; justify-content: center; }
.sep { margin: 6px 13px 0 1px; border: 0; border-top: 1px solid #c9c9c9; }
.r5 { margin-top: 6px; }
.pfoot { margin-top: 3px; height: 36px; border-top: 1px solid #dcdcdc; display: flex; align-items: center; padding-right: 11px; box-sizing: border-box; }
.inf { margin-left: 14px; margin-right: auto; }
.btn { height: 20px; width: 60px; padding: 0; box-sizing: border-box; border: 1px solid #bbb; background: #f0f0f0; font: 12px "DejaVu Sans", sans-serif; color: #555; margin-left: 18px; }
.btn.off { color: #bbb; height: 21px; background: #e8e8e8; }
.comments { position: absolute; left: 4px; top: 746px; width: 300px; height: 25px; box-sizing: border-box; border: 1px solid #d4d4d4; background: #f0f0f0; display: flex; align-items: center; justify-content: space-between; padding: 0 12px 0 24px; font: 11.500px "Open Sans", sans-serif; color: #555; }
.navbar { position: absolute; left: 842px; top: 745px; width: 237px; height: 24px; background: #f0f0f0; display: flex; align-items: center; padding-left: 0; box-sizing: border-box; }
.nt { margin: 0 8px 0 2px; }
.nt.wc { margin-right: 3px; }
.nc { margin: 0 4px 0 0; }
.cap { position: absolute; left: 1890px; top: 752px; }
.timeline { height: 39px; flex: none; box-sizing: border-box; border-top: 3px solid #cdcdcd; background: linear-gradient(#f2f2f2, #e4e4e4); display: flex; align-items: flex-end; position: relative; }
.play { width: 142px; height: 36px; flex: none; display: flex; align-items: center; padding: 10px 0 0 3px; box-sizing: border-box; }
.pb { width: 25px; display: flex; justify-content: center; flex: none; }
.items { display: flex; height: 26px; align-items: flex-start; position: relative; }
.it { width: 24px; height: 24px; flex: none; display: flex; align-items: center; justify-content: center; position: relative; }
.it::after { content: ""; position: absolute; left: 12px; top: 24px; width: 1px; height: 2px; background: #aaa; }
.it.a { background: #0696d7; border-radius: 3px 0 0 3px; }
.it.b { background: #e0e020; border-radius: 0 3px 3px 0; }
.marker { position: relative; width: 2px; height: 28px; background: #555; margin: -2px 0 0 0; flex: none; }
.marker::before { content: ""; position: absolute; left: -5px; top: 0; border-left: 6px solid transparent; border-right: 6px solid transparent; border-top: 8px solid #555; }
.gear { position: absolute; left: 1890px; top: 14px; }
</style>

<style>
html, body { margin: 0; padding: 0; overflow: hidden; }
</style>
